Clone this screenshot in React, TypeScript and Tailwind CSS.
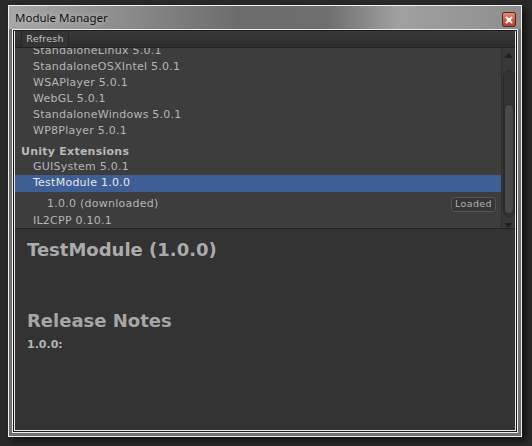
import React from 'react';

const platforms = [
  'StandaloneLinux 5.0.1',
  'StandaloneOSXIntel 5.0.1',
  'WSAPlayer 5.0.1',
  'WebGL 5.0.1',
  'StandaloneWindows 5.0.1',
  'WP8Player 5.0.1',
];

function Scrollbar() {
  return (
    <div className="w-[14px] h-full bg-[#383838] border-l border-[#2e2e2e] flex flex-col items-center">
      <svg width="9" height="6" viewBox="0 0 9 6" className="mt-[5px]">
        <path d="M4.5 0 L9 5 L0 5 Z" fill="#1f1f1f" />
      </svg>
      <div className="mt-[11px] w-[12px] h-[151px] rounded-[6px] bg-[#333333] border border-[#2a2a2a] flex flex-col justify-end">
        <div className="w-full h-[110px] rounded-[6px] bg-[#4a4a4a] border border-[#2b2b2b] mb-[2px]" />
      </div>
      <svg width="9" height="6" viewBox="0 0 9 6" className="mt-[5px]">
        <path d="M0 1 L9 1 L4.5 6 Z" fill="#1f1f1f" />
      </svg>
    </div>
  );
}

export default function App() {
  return (
    <div
      className="w-[532px] h-[446px] bg-[#2a2a2a] overflow-hidden pt-[5px] pl-[8px]"
      style={{ fontFamily: '"DejaVu Sans", Verdana, sans-serif' }}
    >
      <div className="w-[514px] h-[432px] border border-[#f0f0f0] bg-[#707070] flex flex-col px-[3px] pb-[3px] shadow-[4px_4px_8px_rgba(0,0,0,0.6)]">
        {/* title bar */}
        <div className="h-[23px] -mx-[3px] px-[6px] flex items-center justify-between bg-[linear-gradient(90deg,#a6a6a6_0%,#8c8c8c_22%,#6c6c6c_45%,#6e6e6e_62%,#a0a0a0_76%,#8e8e8e_100%)]">
          <span
            className="text-[11.5px] text-[#141414] [text-shadow:0_0_6px_rgba(255,255,255,0.6)]"
            style={{ fontFamily: '"Noto Sans", "Open Sans", sans-serif' }}
          >
            Module Manager
          </span>
          <div className="w-[14px] h-[15px] mt-[4px] mr-[-1px] rounded-[2px] border border-[#5a2a22] bg-[linear-gradient(180deg,#e58b7b_0%,#cf5a46_50%,#b8402e_100%)] flex items-center justify-center">
            <svg width="8" height="8" viewBox="0 0 8 8">
              <path d="M1.5 1.5 L6.5 6.5 M6.5 1.5 L1.5 6.5" stroke="#ffffff" strokeWidth="2" strokeLinecap="round" />
            </svg>
          </div>
        </div>

        {/* inner frame */}
        <div className="flex-1 border border-[#f0f0f0]">
          <div className="h-full border border-[#1b1b1b]">
            <div className="h-full border-l border-r border-b border-[#e6e6e6] flex flex-col bg-[#333333]">
              {/* toolbar */}
              <div className="h-[17px] shrink-0 flex bg-[linear-gradient(180deg,#393939_0%,#2d2d2d_100%)] border-b border-[#222222]">
                <div className="ml-[6px] w-[48px] h-full flex items-center justify-center bg-[#343434] border-l border-r border-[#262626]">
                  <span className="text-[9.5px] tracking-[0.2px] text-[#c4c4c4]">Refresh</span>
                </div>
              </div>

              {/* module list */}
              <div className="h-[181px] shrink-0 flex bg-[#3d3d3d] border-b border-[#222222] text-[11px] tracking-[0.25px] text-[#b6b6b6]">
                <div className="w-[486px] h-full overflow-hidden">
                  <div className="-mt-[5px]">
                    {platforms.map((p) => (
                      <div key={p} className="h-[16px] flex items-center pl-[18px]">
                        {p}
                      </div>
                    ))}
                    <div className="mt-[6px] h-[15px] flex items-center pl-[6px] font-bold text-[#b8b8b8]">
                      Unity Extensions
                    </div>
                    <div className="h-[15px] flex items-center pl-[18px]">GUISystem 5.0.1</div>
                    <div className="h-[17px] flex items-center pl-[18px] bg-[#3e5f96] text-[#e6e6e6]">
                      TestModule 1.0.0
                    </div>
                    <div className="h-[21px] flex items-center justify-between pl-[32px] pr-[5px] pt-[4px]">
                      <span>1.0.0 (downloaded)</span>
                      <span className="h-[15px] px-[3px] flex items-center rounded-[3px] border border-[#555555] bg-[#363636] text-[9.5px] tracking-[0.4px] text-[#b0b0b0]">
                        Loaded
                      </span>
                    </div>
                    <div className="h-[16px] flex items-center pl-[18px]">IL2CPP 0.10.1</div>
                  </div>
                </div>
                <Scrollbar />
              </div>

              {/* details */}
              <div className="flex-1 bg-[#333333] pl-[12px] pt-[9px]">
                <div className="h-[22px] flex items-center text-[18px] font-bold text-[#ababab]">
                  TestModule (1.0.0)
                </div>
                <div className="mt-[49px] h-[22px] flex items-center text-[18px] font-bold text-[#a6a6a6]">
                  Release Notes
                </div>
                <div className="mt-[7px] h-[14px] flex items-center text-[11px] font-bold text-[#b4b4b4]">
                  1.0.0:
                </div>
              </div>
            </div>
          </div>
        </div>
      </div>
    </div>
  );
}
